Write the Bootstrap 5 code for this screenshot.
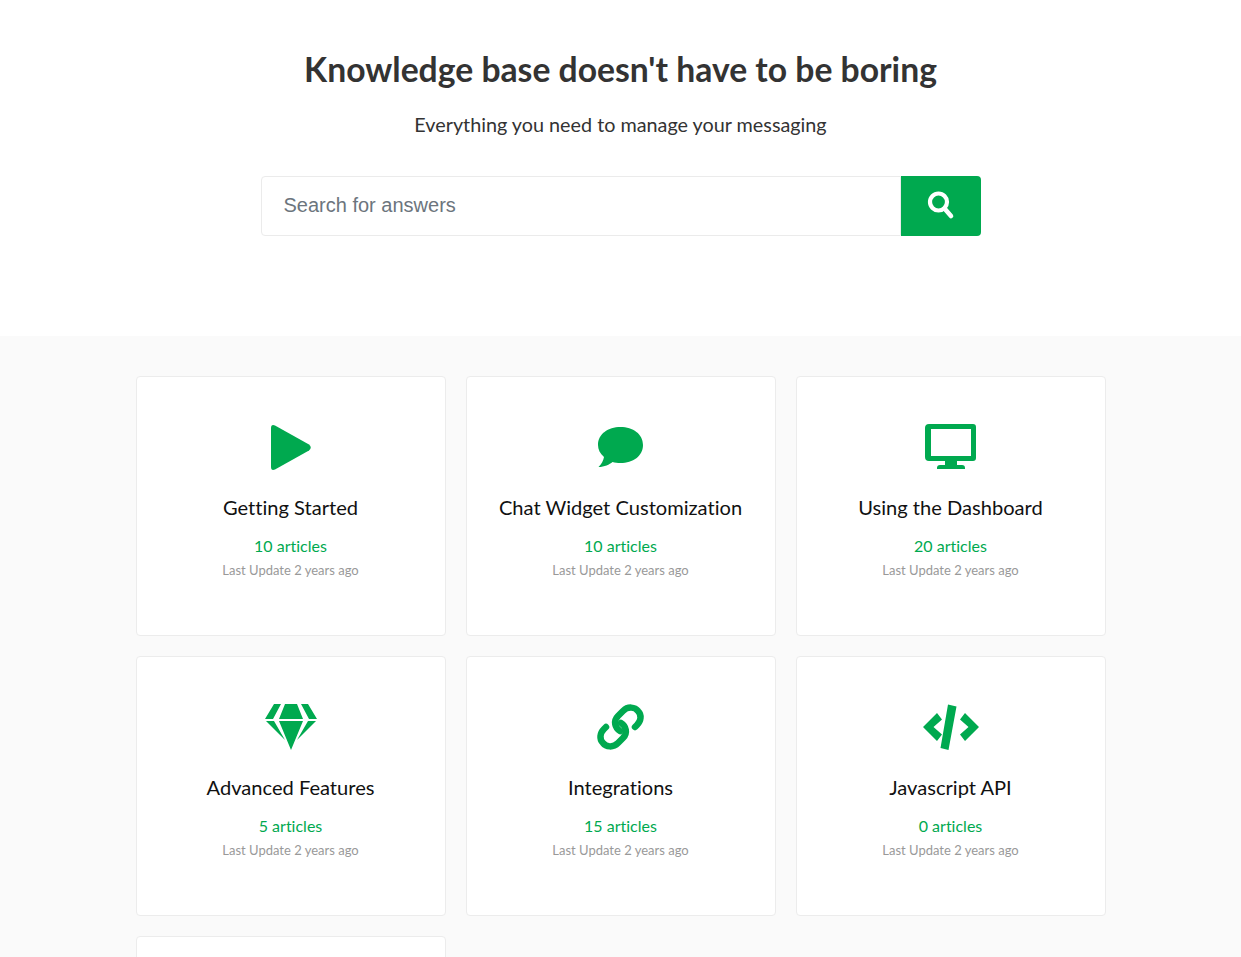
<!DOCTYPE html>
<html lang="en">

<head>
    <meta charset="UTF-8">
    <title>Knowledge base</title>
    <meta name="viewport" content="width=device-width, initial-scale=1">
    <link href="https://cdn.jsdelivr.net/npm/bootstrap@5.3.3/dist/css/bootstrap.min.css" rel="stylesheet">

    <style>
        body {
            font-family: "Lato", sans-serif;
            font-variant-ligatures: none;
            background: #fafafa;
        }

        /* hero */
        .kb-hero {
            height: 336px;
            padding-top: 45px;
            background: #fff;
        }

        .kb-title {
            font-size: 33.7px;
            line-height: 48px;
            font-weight: 700;
            color: #333;
            margin-bottom: 19px;
        }

        .kb-sub {
            font-size: 19.8px;
            line-height: 24px;
            color: #333;
            margin-bottom: 40px;
        }

        .kb-search {
            width: 720px;
            height: 60px;
        }

        .kb-search input {
            height: 60px;
            padding: 0 22px 2px;
            font-family: "Liberation Sans", sans-serif;
            font-size: 20px;
            border-color: #ebebeb;
            border-radius: 4px 0 0 4px;
        }

        .kb-search input::placeholder {
            color: #6c757d;
        }

        .kb-search button {
            width: 80px;
            flex: none;
            padding: 0 0 2px;
            background: #00a94f;
            border: 0;
            border-radius: 0 4px 4px 0;
        }

        /* cards */
        .kb-grid {
            width: 970px;
            padding-top: 40px;
            display: grid;
            grid-template-columns: repeat(3, 310px);
            grid-auto-rows: 260px;
            gap: 20px;
        }

        .kb-card {
            padding-top: 47px;
            border: 1px solid #ececec;
            border-radius: 4px;
            background: #fff;
        }

        .kb-icon {
            display: block;
            height: 48px;
            width: 60px;
            margin: 0 auto 22px;
            fill: #00a94f;
        }

        .kb-name {
            font-size: 20.1px;
            line-height: 26px;
            font-weight: 400;
            color: #111;
            margin-bottom: 16px;
        }

        .kb-count {
            font-size: 16px;
            line-height: 20px;
            color: #00a94f;
            margin-bottom: 5px;
        }

        .kb-date {
            font-size: 13px;
            line-height: 18px;
            color: #999;
        }

        .kb-link {
            fill: none;
            stroke: #00a94f;
            stroke-width: 6.5;
            stroke-linecap: round;
        }
    </style>
</head>

<body>

    <!-- Hero -->
    <section class="kb-hero text-center">
        <h1 class="kb-title">Knowledge base doesn't have to be boring</h1>
        <p class="kb-sub">Everything you need to manage your messaging</p>
        <form class="kb-search d-flex mx-auto">
            <input class="form-control shadow-none" type="text" placeholder="Search for answers">
            <button class="d-flex align-items-center justify-content-center" type="button" aria-label="Search">
                <svg width="30" height="30" viewBox="0 0 30 30" fill="none" stroke="#fff">
                    <circle cx="12.5" cy="12" r="8.5" stroke-width="4.2" />
                    <path d="M18.5 18.5 L25 26" stroke-width="4.6" stroke-linecap="round" />
                </svg>
            </button>
        </form>
    </section>

    <!-- Categories -->
    <main class="kb-grid mx-auto">

        <div class="kb-card text-center">
            <svg class="kb-icon" viewBox="0 0 60 48">
                <path d="M10 4 Q10 0 14 1.5 L48 20.5 Q51.5 23.5 48 26.5 L14 45.5 Q10 47 10 43 Z" />
            </svg>
            <h5 class="kb-name">Getting Started</h5>
            <div class="kb-count">10 articles</div>
            <div class="kb-date">Last Update 2 years ago</div>
        </div>

        <div class="kb-card text-center">
            <svg class="kb-icon" viewBox="0 0 60 48">
                <path d="M29.5 3 C42 3 52 10 52 21 C52 32 42 39 29.5 39 C26.5 39 24 38.6 21.5 38 C18.5 40.5 13.5 43 7.5 43 C10.5 40 12.5 36.5 13 33 C9 29.5 7 25.5 7 21 C7 10 17 3 29.5 3 Z" />
            </svg>
            <h5 class="kb-name">Chat Widget Customization</h5>
            <div class="kb-count">10 articles</div>
            <div class="kb-date">Last Update 2 years ago</div>
        </div>

        <div class="kb-card text-center">
            <svg class="kb-icon" viewBox="0 0 60 48">
                <path fill-rule="evenodd" d="M8 0 H52 Q55 0 55 3 V34 Q55 37 52 37 H36 V41 H41 Q44 41 44 44 V45 H16 V44 Q16 41 19 41 H24 V37 H8 Q4 37 4 33 V4 Q4 0 8 0 Z M10 5 V32 H50 V5 Z" />
            </svg>
            <h5 class="kb-name">Using the Dashboard</h5>
            <div class="kb-count">20 articles</div>
            <div class="kb-date">Last Update 2 years ago</div>
        </div>

        <div class="kb-card text-center">
            <svg class="kb-icon" viewBox="0 0 60 48">
                <path d="M13 0 H20 L12 15 H4 Z M24 0 H36 L42 15 H18 Z M40 0 H47 L56 15 H48 Z M5 17 H13 L24 36 Z M18 17 H42 L30 46 Z M47 17 H55 L36 36 Z" />
            </svg>
            <h5 class="kb-name">Advanced Features</h5>
            <div class="kb-count">5 articles</div>
            <div class="kb-date">Last Update 2 years ago</div>
        </div>

        <div class="kb-card text-center">
            <svg class="kb-icon" viewBox="0 0 60 48">
                <path class="kb-link" d="M29 27 C24 24 22 17 27 12 L32 7 C37 2 44 3 47 7 C51 11 50 17 46 21 L44 23" />
                <path class="kb-link" d="M30 19 C35 22 37 29 32 34 L27 39 C22 44 15 43 12 39 C8 35 9 29 13 25 L15 23" />
            </svg>
            <h5 class="kb-name">Integrations</h5>
            <div class="kb-count">15 articles</div>
            <div class="kb-date">Last Update 2 years ago</div>
        </div>

        <div class="kb-card text-center">
            <svg class="kb-icon" viewBox="0 0 60 48">
                <path d="M16 9 L21 15.5 L12.5 23 L21 30.5 L16 37 L2 23 Z M44 9 L39 15.5 L47.5 23 L39 30.5 L44 37 L58 23 Z M27 0.5 L35.5 2.5 L27.5 46 L19.5 44 Z" />
            </svg>
            <h5 class="kb-name">Javascript API</h5>
            <div class="kb-count">0 articles</div>
            <div class="kb-date">Last Update 2 years ago</div>
        </div>

        <div class="kb-card"></div>

    </main>

    <script src="https://cdn.jsdelivr.net/npm/bootstrap@5.3.3/dist/js/bootstrap.bundle.min.js"></script>
</body>

</html>
